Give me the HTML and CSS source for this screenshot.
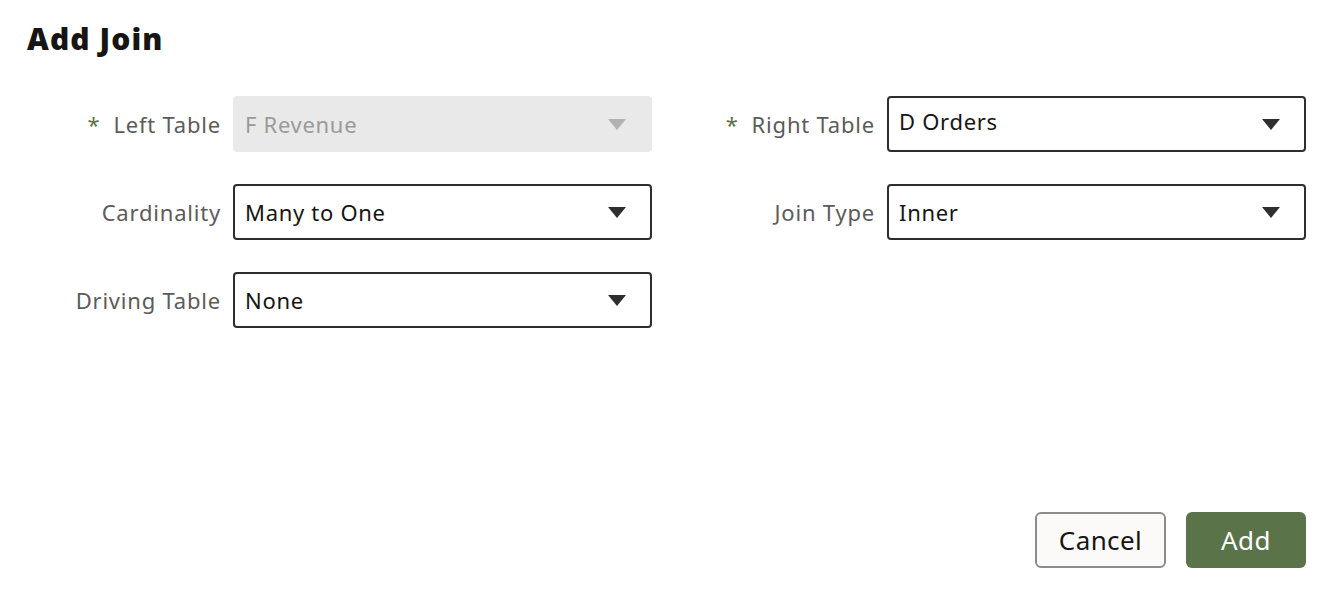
FILE: index.html
```html
<!DOCTYPE html>
<html>
<head>
<meta charset="utf-8">
<link rel="stylesheet" href="styles.css">
</head>
<body>
<div class="dialog">
  <h1 class="title">Add Join</h1>
  <div class="form">
    <label class="label"><span class="req">*</span>Left Table</label>
    <div class="select disabled">
      <span class="value">F Revenue</span>
      <svg class="arrow" width="18" height="11" viewBox="0 0 18 11"><path d="M0 0H18L9 11Z"/></svg>
    </div>
    <label class="label"><span class="req">*</span>Right Table</label>
    <div class="select high">
      <span class="value">D Orders</span>
      <svg class="arrow" width="18" height="11" viewBox="0 0 18 11"><path d="M0 0H18L9 11Z"/></svg>
    </div>

    <label class="label">Cardinality</label>
    <div class="select">
      <span class="value">Many to One</span>
      <svg class="arrow" width="18" height="11" viewBox="0 0 18 11"><path d="M0 0H18L9 11Z"/></svg>
    </div>
    <label class="label">Join Type</label>
    <div class="select">
      <span class="value">Inner</span>
      <svg class="arrow" width="18" height="11" viewBox="0 0 18 11"><path d="M0 0H18L9 11Z"/></svg>
    </div>

    <label class="label">Driving Table</label>
    <div class="select">
      <span class="value">None</span>
      <svg class="arrow" width="18" height="11" viewBox="0 0 18 11"><path d="M0 0H18L9 11Z"/></svg>
    </div>
  </div>
  <div class="footer">
    <button class="btn btn-cancel">Cancel</button>
    <button class="btn btn-add">Add</button>
  </div>
</div>
</body>
</html>
```

FILE: styles.css
```css
* { box-sizing: border-box; }
html, body {
  margin: 0;
  padding: 0;
  background: #ffffff;
}
body {
  font-family: "Noto Sans", "Open Sans", "Liberation Sans", sans-serif;
  color: #161513;
}
.dialog {
  height: 602px;
  display: flex;
  flex-direction: column;
  padding: 18px 22px 34px 27px;
}
.title {
  margin: 0;
  font-size: 30px;
  font-weight: 900;
  line-height: 42px;
  color: #161513;
  letter-spacing: 1.1px;
}
.form {
  margin-top: 36px;
  display: grid;
  grid-template-columns: 193px 419px 209px 419px;
  grid-auto-rows: 56px;
  column-gap: 13px;
  row-gap: 32px;
}
.label {
  display: flex;
  align-items: center;
  justify-content: flex-end;
  font-size: 22px;
  letter-spacing: 0.8px;
  color: #5c5b59;
  white-space: nowrap;
  margin-right: -1px;
}
.req {
  color: #5a7348;
  margin-right: 13px;
  font-size: 22px;
}
.select {
  display: flex;
  align-items: center;
  justify-content: space-between;
  border: 2px solid #2f2e2c;
  border-radius: 4px;
  padding: 0 24px 0 10px;
  font-size: 22px;
  letter-spacing: 0.7px;
  color: #161513;
  background: #ffffff;
}
.select.high .value {
  margin-bottom: 6px;
}
.select.disabled {
  border-color: #e9e9e9;
  background: #e9e9e9;
  color: #9b9a98;
}
.arrow path { fill: #2f2e2c; }
.select.disabled .arrow path { fill: #b3b2b0; }
.footer {
  margin-top: auto;
  display: flex;
  justify-content: flex-end;
  gap: 20px;
}
.btn {
  height: 56px;
  border-radius: 6px;
  font-family: "Noto Sans", "Open Sans", "Liberation Sans", sans-serif;
  font-size: 26px;
  letter-spacing: 0.4px;
  padding: 0;
  cursor: pointer;
}
.btn-cancel {
  width: 131px;
  background: #fbfaf8;
  border: 2px solid #8d8c8a;
  color: #161513;
}
.btn-add {
  width: 120px;
  background: #5a7348;
  border: none;
  color: #ffffff;
}
```
